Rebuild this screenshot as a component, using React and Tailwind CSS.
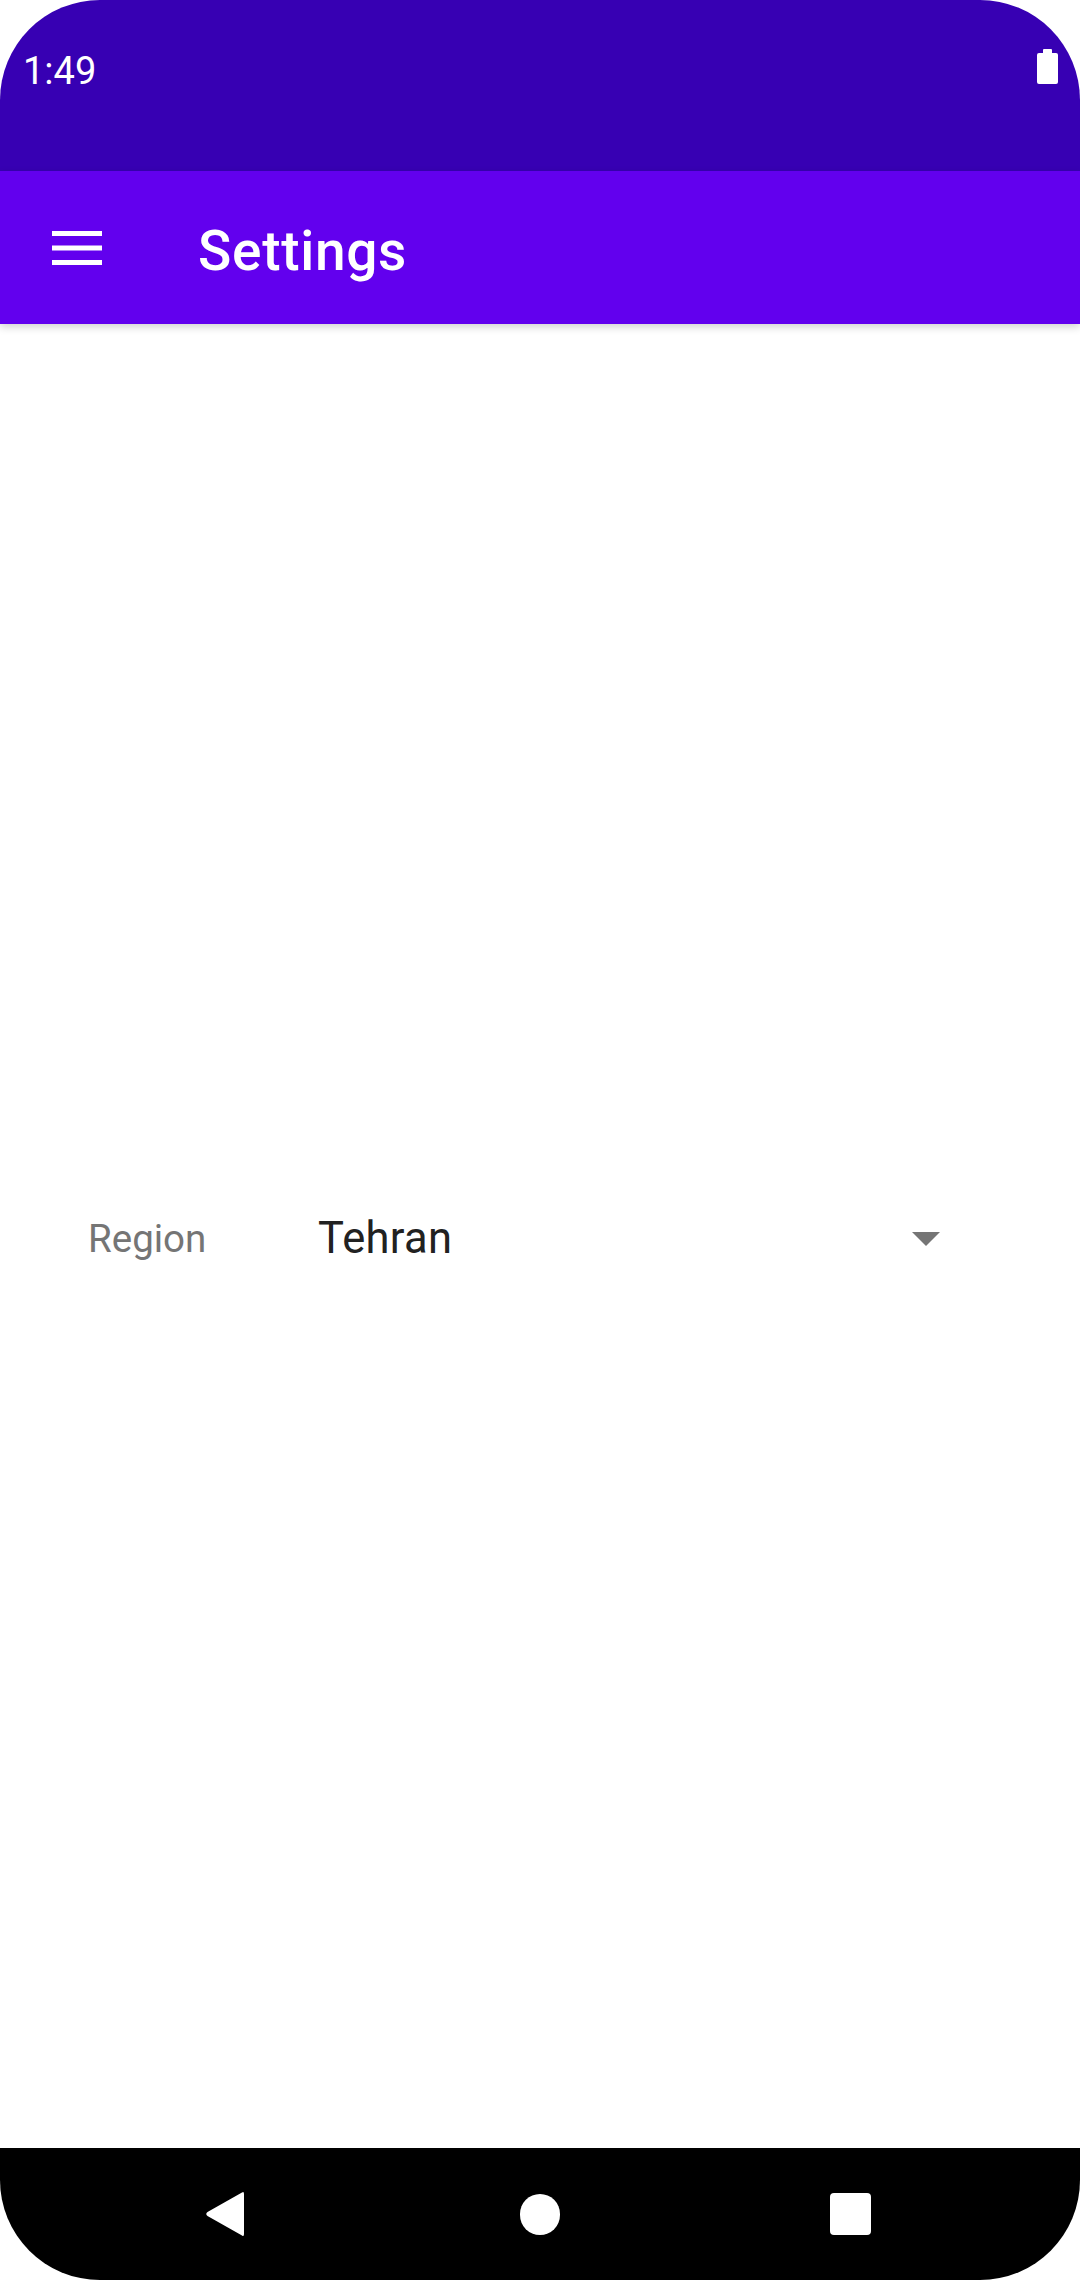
import React from "react";

export default function App() {
  return (
    <div className="w-[1080px] h-[2280px] bg-white" style={{ fontFamily: "Roboto, 'Noto Sans', sans-serif" }}>
      <div className="w-full h-full rounded-[100px] overflow-hidden flex flex-col bg-white">
        {/* Status bar */}
        <div className="h-[171px] bg-[#3700B3] flex items-start justify-between pl-[23px] pr-[22px] shrink-0">
          <span className="text-white text-[38px] leading-none mt-[52px] tracking-[0px]">1:49</span>
          <div className="mt-[49px] flex flex-col items-center">
            <div className="w-[9px] h-[4px] bg-white rounded-t-[1px]" />
            <div className="w-[21px] h-[31px] bg-white rounded-[2px]" />
          </div>
        </div>
        {/* App bar */}
        <div className="h-[153px] bg-[#6200EE] flex items-center shrink-0 relative z-10 shadow-[0_3px_8px_rgba(0,0,0,0.18)]">
          <svg width="50" height="34" viewBox="0 0 50 34" className="ml-[52px]">
            <rect x="0" y="0" width="50" height="5" fill="white" />
            <rect x="0" y="14.5" width="50" height="5" fill="white" />
            <rect x="0" y="29" width="50" height="5" fill="white" />
          </svg>
          <span className="ml-[96px] mt-[7px] text-white text-[55px] tracking-[0.7px] font-medium leading-none">Settings</span>
        </div>
        {/* Content */}
        <div className="flex-1 flex items-center">
          <div className="flex items-center w-full mt-[6px]">
            <span className="ml-[88px] w-[230px] text-[38.5px] text-[#757575] leading-none">Region</span>
            <span className="text-[43.5px] tracking-[0.3px] text-[#212121] leading-none">Tehran</span>
            <svg width="28" height="14" viewBox="0 0 28 14" className="ml-auto mr-[140px]">
              <polygon points="0,0 28,0 14,14" fill="#757575" />
            </svg>
          </div>
        </div>
        {/* Nav bar */}
        <div className="h-[132px] bg-black flex items-center shrink-0">
          <svg width="40" height="46" viewBox="0 0 40 46" className="ml-[205px]">
            <path d="M37 1.5 Q39 0 39 3 L39 43 Q39 46 37 44.5 L2.5 25 Q0 23 2.5 21 Z" fill="white" />
          </svg>
          <div className="ml-[275px] w-[40px] h-[41px] rounded-full bg-white" />
          <div className="ml-[270px] w-[41px] h-[42px] rounded-[4px] bg-white" />
        </div>
      </div>
    </div>
  );
}
